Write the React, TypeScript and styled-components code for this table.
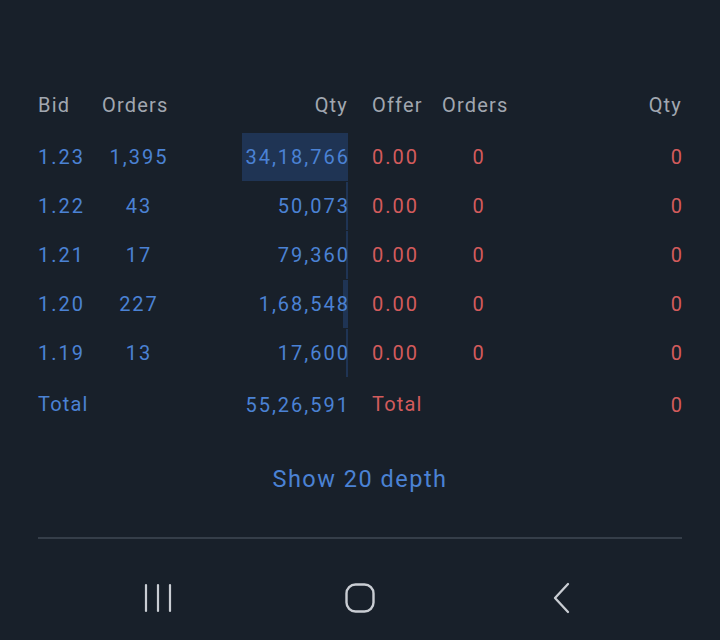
import React from "react";
import styled, { createGlobalStyle } from "styled-components";

const GlobalStyle = createGlobalStyle`
  html, body {
    margin: 0;
    padding: 0;
    background: #18202a;
  }
  * { box-sizing: border-box; }
`;

const BLUE = "#4b82d4";
const RED = "#d35b5c";
const GREY = "#a1a7b0";

const Page = styled.div`
  width: 720px;
  height: 640px;
  background: #18202a;
  font-family: Roboto, "Noto Sans", sans-serif;
  display: flex;
  flex-direction: column;
  padding: 80px 38px 0;
  overflow: hidden;
`;

const Book = styled.div`
  display: grid;
  grid-template-columns: 310px 310px;
  column-gap: 24px;
`;

const Half = styled.div`
  display: flex;
  flex-direction: column;
`;

const Row = styled.div<{ $h: number; $cols: string }>`
  display: grid;
  grid-template-columns: ${(p) => p.$cols};
  height: ${(p) => p.$h}px;
  align-items: center;
`;

const Cell = styled.div<{ $align?: "left" | "center" | "right"; $color: string; $head?: boolean }>`
  position: relative;
  height: 100%;
  display: flex;
  align-items: center;
  justify-content: ${(p) =>
    p.$align === "right" ? "flex-end" : p.$align === "center" ? "center" : "flex-start"};
  padding-bottom: ${(p) => (p.$head ? 3 : 0)}px;
  color: ${(p) => p.$color};
  font-size: 20px;
  letter-spacing: ${(p) => (p.$head ? 1.2 : 2)}px;
  white-space: nowrap;
`;

const Bar = styled.div`
  position: absolute;
  right: 0;
  top: 1px;
  bottom: 0;
  background: #1f3454;
`;

const CellText = styled.span`
  position: relative;
  margin-right: -2px;
`;

const ShowMore = styled.div`
  margin-top: 18px;
  height: 56px;
  display: flex;
  align-items: center;
  justify-content: center;
  color: ${BLUE};
  font-size: 23.5px;
  letter-spacing: 1.5px;
`;

const Divider = styled.div`
  margin-top: 30px;
  height: 2px;
  background: #353e49;
`;

const NavBar = styled.div`
  display: grid;
  grid-template-columns: repeat(3, 202px);
  justify-content: center;
  height: 101px;
  align-items: center;
  padding-top: 16px;
`;

const NavItem = styled.div`
  display: flex;
  justify-content: center;
  align-items: center;
`;

const leftCols = "64px 74px 1fr";
const rightCols = "70px 74px 1fr";

const bids = [
  { p: "1.23", o: "1,395", q: "34,18,766", n: 3418766 },
  { p: "1.22", o: "43", q: "50,073", n: 50073 },
  { p: "1.21", o: "17", q: "79,360", n: 79360 },
  { p: "1.20", o: "227", q: "1,68,548", n: 168548 },
  { p: "1.19", o: "13", q: "17,600", n: 17600 },
];
const TOTAL = 5526591;

export default function App() {
  return (
    <>
      <GlobalStyle />
      <Page>
        <Book>
          <Half>
            <Row $h={52} $cols={leftCols}>
              <Cell $head $color={GREY}>Bid</Cell>
              <Cell $head $color={GREY}>Orders</Cell>
              <Cell $head $align="right" $color={GREY}>Qty</Cell>
            </Row>
            {bids.map((b) => (
              <Row key={b.p} $h={49} $cols={leftCols}>
                <Cell $color={BLUE}>{b.p}</Cell>
                <Cell $align="center" $color={BLUE}>{b.o}</Cell>
                <Cell $align="right" $color={BLUE}>
                  <Bar style={{ width: `${Math.max(1, (b.n / TOTAL) * 100)}%` }} />
                  <CellText>{b.q}</CellText>
                </Cell>
              </Row>
            ))}
            <Row $h={56} $cols={leftCols}>
              <Cell $head $color={BLUE}>Total</Cell>
              <Cell $color={BLUE}></Cell>
              <Cell $align="right" $color={BLUE}>
                <CellText>55,26,591</CellText>
              </Cell>
            </Row>
          </Half>
          <Half>
            <Row $h={52} $cols={rightCols}>
              <Cell $head $color={GREY}>Offer</Cell>
              <Cell $head $color={GREY}>Orders</Cell>
              <Cell $head $align="right" $color={GREY}>Qty</Cell>
            </Row>
            {bids.map((b) => (
              <Row key={b.p} $h={49} $cols={rightCols}>
                <Cell $color={RED}>0.00</Cell>
                <Cell $align="center" $color={RED}>0</Cell>
                <Cell $align="right" $color={RED}>
                  <CellText>0</CellText>
                </Cell>
              </Row>
            ))}
            <Row $h={56} $cols={rightCols}>
              <Cell $head $color={RED}>Total</Cell>
              <Cell $color={RED}></Cell>
              <Cell $align="right" $color={RED}>
                <CellText>0</CellText>
              </Cell>
            </Row>
          </Half>
        </Book>
        <ShowMore>Show 20 depth</ShowMore>
        <Divider />
        <NavBar>
          <NavItem>
            <svg width="30" height="32" viewBox="0 0 30 32">
              <g stroke="#c9cdd3" strokeWidth="2.2" strokeLinecap="round">
                <line x1="3" y1="3" x2="3" y2="29" />
                <line x1="15" y1="3" x2="15" y2="29" />
                <line x1="27" y1="3" x2="27" y2="29" />
              </g>
            </svg>
          </NavItem>
          <NavItem>
            <svg width="32" height="32" viewBox="0 0 32 32">
              <rect x="2.5" y="2.5" width="27" height="27" rx="9" fill="none" stroke="#c9cdd3" strokeWidth="2.4" />
            </svg>
          </NavItem>
          <NavItem>
            <svg width="20" height="32" viewBox="0 0 20 32">
              <polyline points="16,2 3,16 16,30" fill="none" stroke="#c9cdd3" strokeWidth="2.3" strokeLinecap="round" strokeLinejoin="round" />
            </svg>
          </NavItem>
        </NavBar>
      </Page>
    </>
  );
}
